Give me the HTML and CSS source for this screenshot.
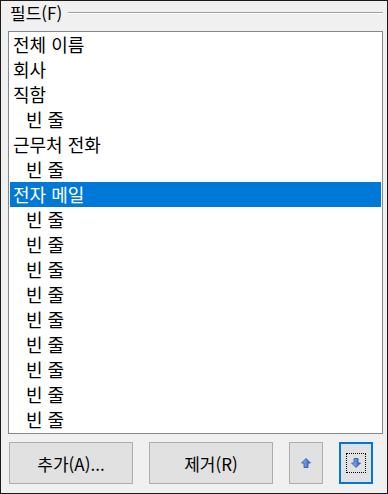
FILE: index.html
```html
<!DOCTYPE html>
<html lang="ko">
<head>
<meta charset="utf-8">
<link rel="stylesheet" href="styles.css">
</head>
<body>
<div class="window">
  <div class="group-head">
    <span class="group-label">필드(F)</span>
    <span class="group-line"></span>
  </div>
  <div class="list">
    <div class="row">전체 이름</div>
    <div class="row">회사</div>
    <div class="row">직함</div>
    <div class="row indent">빈 줄</div>
    <div class="row">근무처 전화</div>
    <div class="row indent">빈 줄</div>
    <div class="row selected">전자 메일</div>
    <div class="row indent">빈 줄</div>
    <div class="row indent">빈 줄</div>
    <div class="row indent">빈 줄</div>
    <div class="row indent">빈 줄</div>
    <div class="row indent">빈 줄</div>
    <div class="row indent">빈 줄</div>
    <div class="row indent">빈 줄</div>
    <div class="row indent">빈 줄</div>
    <div class="row indent">빈 줄</div>
  </div>
  <div class="buttons">
    <button class="btn wide">추가(A)...</button>
    <button class="btn wide">제거(R)</button>
    <button class="btn icon-btn">
      <svg width="10" height="10" viewBox="0 0 10 10"><defs><linearGradient id="g1" x1="0" y1="0" x2="1" y2="0"><stop offset="0" stop-color="#9cc4f4"/><stop offset="1" stop-color="#2757c7"/></linearGradient></defs><path d="M5 0.5 L9.5 5 L7 5 L7 9.5 L3 9.5 L3 5 L0.5 5 Z" fill="url(#g1)" stroke="#2a4fa8" stroke-width="0.8"/></svg>
    </button>
    <button class="btn icon-btn focused">
      <span class="focus-rect">
        <svg width="10" height="10" viewBox="0 0 10 10"><defs><linearGradient id="g2" x1="0" y1="0" x2="1" y2="0"><stop offset="0" stop-color="#9cc4f4"/><stop offset="1" stop-color="#2757c7"/></linearGradient></defs><path d="M5 9.5 L9.5 5 L7 5 L7 0.5 L3 0.5 L3 5 L0.5 5 Z" fill="url(#g2)" stroke="#2a4fa8" stroke-width="0.8"/></svg>
      </span>
    </button>
  </div>
</div>
</body>
</html>
```
FILE: styles.css
```css
html, body {
  margin: 0;
  padding: 0;
}
body {
  font-family: "Noto Sans CJK KR", "Noto Sans", sans-serif;
  font-size: 17px;
  color: #000;
}
.window {
  width: 388px;
  height: 494px;
  box-sizing: border-box;
  border: 1px solid #1a1a1a;
  background: #f0f0f0;
  padding: 0 4px 0 7px;
  display: flex;
  flex-direction: column;
}
.group-head {
  display: flex;
  align-items: center;
  height: 24px;
  padding-left: 2px;
}
.group-label {
  font-size: 17px;
  line-height: 24px;
  padding-right: 6px;
}
.group-line {
  flex: 1;
  height: 0;
  border-top: 1px solid #a0a0a0;
  border-bottom: 1px solid #ffffff;
}
.list {
  margin-top: 6px;
  height: 403px;
  box-sizing: border-box;
  border: 1px solid #828790;
  background: #fff;
  padding: 0 1px;
  overflow: hidden;
}
.row {
  height: 25px;
  line-height: 25px;
  padding-left: 3px;
  white-space: nowrap;
  font-size: 18px;
}
.row.indent {
  padding-left: 16px;
}
.row.selected {
  background: #0078d7;
  color: #fff;
}
.buttons {
  display: flex;
  margin-top: 8px;
  padding-left: 1px;
}
.btn {
  height: 42px;
  box-sizing: border-box;
  border: 1px solid #adadad;
  background: #e1e1e1;
  font-family: "Noto Sans CJK KR", "Noto Sans", sans-serif;
  font-size: 17px;
  color: #000;
  padding: 0;
  margin: 0;
  display: flex;
  align-items: center;
  justify-content: center;
}
.btn.wide {
  width: 124px;
  margin-right: 16px;
}
.icon-btn {
  width: 34px;
  margin-right: 16px;
}
.icon-btn.focused {
  border: 2px solid #0078d7;
  margin-right: 0;
}
.focus-rect {
  width: 20px;
  height: 20px;
  box-sizing: border-box;
  border: 1px dotted #000;
  display: flex;
  align-items: center;
  justify-content: center;
}
```
